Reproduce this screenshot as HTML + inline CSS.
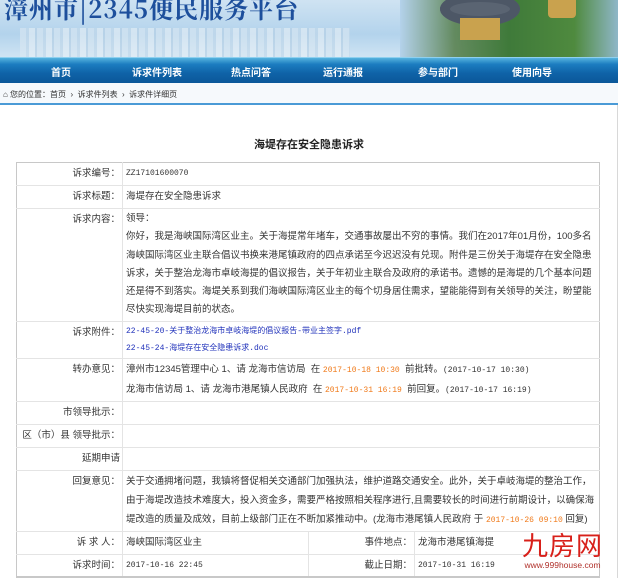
<!DOCTYPE html>
<html><head><meta charset="utf-8"><style>
*{margin:0;padding:0;box-sizing:border-box}
body{width:625px;height:578px;overflow:hidden;background:#fff;font-family:"Liberation Sans","Noto Sans CJK SC","WenQuanYi Zen Hei",sans-serif;font-size:9px;color:#333;position:relative}
#hd{position:absolute;left:0;top:0;width:618px;height:57px;background:linear-gradient(180deg,#cfe3f2 0%,#b3d3ec 60%,#cfe4f3 100%);overflow:hidden}
#hd .t{position:absolute;left:4px;top:-10px;font-size:24px;color:#1d4f9c;letter-spacing:1px;white-space:nowrap;font-family:"Noto Serif CJK SC",serif;font-weight:bold}
#hd .city{position:absolute;left:20px;top:28px;width:330px;height:29px;background:repeating-linear-gradient(90deg,#dbe8f2 0 6px,#c4d9ea 6px 9px,#e8f0f6 9px 15px,#b9d1e5 15px 17px);opacity:.6}
#hd .pic{position:absolute;left:400px;top:0;width:218px;height:57px;background:linear-gradient(90deg,rgba(180,210,235,1) 0,rgba(90,130,80,.9) 25%,#3f7a3a 50%,#4f8a3e 80%,#8fb7c8 100%)}
#hd .tw{position:absolute;left:440px;top:-8px;width:80px;height:34px;border-radius:50%;background:#5a6472;box-shadow:inset 0 0 0 10px #4d5766}
#hd .tw2{position:absolute;left:460px;top:18px;width:40px;height:22px;background:#c9a24e}
#hd .tw3{position:absolute;left:548px;top:0;width:28px;height:18px;background:#c9a24e;border-radius:0 0 4px 4px}
#nav{position:absolute;left:0;top:57px;width:618px;height:26px;background:linear-gradient(180deg,#56b3de 0%,#1c7dc0 25%,#0f63a8 60%,#0b5799 100%);border-top:1px solid #8fd0ef}
#nav span{position:absolute;top:6px;color:#fff;font-weight:bold;font-size:10px}
#bc{position:absolute;left:0;top:83px;width:618px;height:22px;background:#f6f9fc;border-bottom:2px solid #4a9ad6;font-size:8px;color:#333;padding:6px 0 0 3px}
#main{position:absolute;left:0;top:105px;width:618px;height:473px;border-right:1px solid #d8d8d8}
h1{position:absolute;left:0;top:136px;width:618px;text-align:center;font-size:11px;font-weight:bold;color:#222}
table{position:absolute;left:16px;top:162px;width:584px;border-collapse:collapse;border:1px solid #c8c8c8;border-bottom:2px solid #c8c8c8}
td{border-bottom:1px solid #e4e4e4;font-size:9.5px;color:#333;vertical-align:top;line-height:19px;padding:1px 3px}
td.l{width:106px;text-align:right;border-right:1px solid #e4e4e4;padding-right:2px}
.b{color:#2233bb;font-family:"Liberation Mono","Noto Sans CJK SC",monospace;font-size:8px}
.o{color:#f07a1a;font-family:"Liberation Mono",monospace;font-size:8px}
.m{font-family:"Liberation Mono","Noto Sans CJK SC",monospace;font-size:8px}
.mid{border-right:1px solid #e4e4e4}
#logo{position:absolute;left:522px;top:532px;text-align:center}
</style></head><body>
<div id="hd"><div class="city"></div><div class="pic"></div><div class="tw"></div><div class="tw2"></div><div class="tw3"></div><div class="t">漳州市|2345便民服务平台</div></div>
<div id="nav"><span style="left:51px">首页</span><span style="left:132px">诉求件列表</span><span style="left:231px">热点问答</span><span style="left:323px">运行通报</span><span style="left:418px">参与部门</span><span style="left:512px">使用向导</span></div>
<div id="bc">⌂ 您的位置：首页 &nbsp;› &nbsp;诉求件列表 &nbsp;› &nbsp;诉求件详细页</div>
<div id="main"></div>
<h1>海堤存在安全隐患诉求</h1>
<table>
<tr style="height:23px"><td class="l">诉求编号：</td><td colspan="3" class="m">ZZ17101600070</td></tr>
<tr style="height:23px"><td class="l">诉求标题：</td><td colspan="3">海堤存在安全隐患诉求</td></tr>
<tr style="height:113px"><td class="l">诉求内容：</td><td colspan="3" style="line-height:18.3px">领导：<br>你好，我是海峡国际湾区业主。关于海提常年堵车，交通事故屡出不穷的事情。我们在2017年01月份，100多名海峡国际湾区业主联合倡议书换来港尾镇政府的四点承诺至今迟迟没有兑现。附件是三份关于海堤存在安全隐患诉求，关于整治龙海市卓岐海提的倡议报告，关于年初业主联合及政府的承诺书。遗憾的是海堤的几个基本问题还是得不到落实。海堤关系到我们海峡国际湾区业主的每个切身居住需求，望能能得到有关领导的关注，盼望能尽快实现海堤目前的状态。</td></tr>
<tr style="height:37px"><td class="l">诉求附件：</td><td colspan="3" class="b" style="line-height:17px">22-45-20-关于整治龙海市卓岐海堤的倡议报告-带业主签字.pdf<br>22-45-24-海堤存在安全隐患诉求.doc</td></tr>
<tr style="height:42px"><td class="l">转办意见：</td><td colspan="3">漳州市12345管理中心 1、请 龙海市信访局 &nbsp;在 <span class="o">2017-10-18 10:30</span> &nbsp;前批转。<span class="m">(2017-10-17 10:30)</span><br>龙海市信访局 1、请 龙海市港尾镇人民政府 &nbsp;在 <span class="o">2017-10-31 16:19</span> &nbsp;前回复。<span class="m">(2017-10-17 16:19)</span></td></tr>
<tr style="height:23px"><td class="l">市领导批示：</td><td colspan="3"></td></tr>
<tr style="height:23px"><td class="l">区（市）县 领导批示：</td><td colspan="3"></td></tr>
<tr style="height:23px"><td class="l">延期申请</td><td colspan="3"></td></tr>
<tr style="height:59px"><td class="l">回复意见：</td><td colspan="3">关于交通拥堵问题，我镇将督促相关交通部门加强执法，维护道路交通安全。此外，关于卓岐海堤的整治工作，由于海堤改造技术难度大，投入资金多，需要严格按照相关程序进行,且需要较长的时间进行前期设计，以确保海堤改造的质量及成效，目前上级部门正在不断加紧推动中。(龙海市港尾镇人民政府 于 <span class="o">2017-10-26 09:10</span> 回复)</td></tr>
<tr style="height:23px"><td class="l">诉 求 人：</td><td class="mid" style="width:186px">海峡国际湾区业主</td><td class="l" style="width:105px">事件地点：</td><td>龙海市港尾镇海提</td></tr>
<tr style="height:22px"><td class="l">诉求时间：</td><td class="mid m">2017-10-16 22:45</td><td class="l">截止日期：</td><td class="m">2017-10-31 16:19</td></tr>
</table>
<div id="logo"><div style="color:#d8201a;font-size:26px;line-height:28px;letter-spacing:1px">九房网</div><div style="color:#b0302a;font-size:8.5px">www.999house.com</div></div>
</body></html>
